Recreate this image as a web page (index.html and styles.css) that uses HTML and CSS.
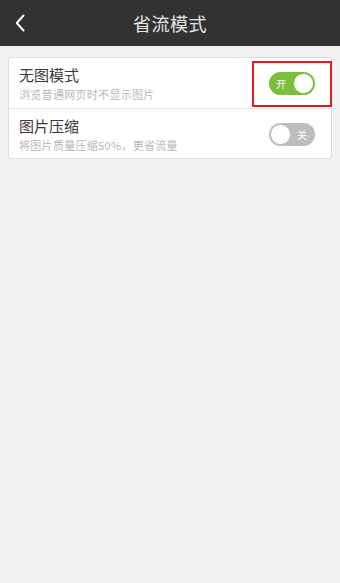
FILE: index.html
```html
<!DOCTYPE html>
<html lang="zh">
<head>
<meta charset="utf-8">
<link rel="stylesheet" href="styles.css">
</head>
<body>
<header class="topbar">
  <span class="back">
    <svg width="10" height="18" viewBox="0 0 10 18"><path d="M8.5 1.5 L1.8 9 L8.5 16.5" fill="none" stroke="#fff" stroke-width="2" stroke-linecap="round" stroke-linejoin="round"/></svg>
  </span>
  <h1 class="title">省流模式</h1>
</header>
<main class="page">
  <section class="card">
    <div class="row">
      <div class="text">
        <div class="name">无图模式</div>
        <div class="desc">浏览普通网页时不显示图片</div>
      </div>
      <div class="switch on"><span class="label">开</span><span class="knob"></span></div>
      <div class="highlight"></div>
    </div>
    <div class="row">
      <div class="text">
        <div class="name">图片压缩</div>
        <div class="desc">将图片质量压缩50%，更省流量</div>
      </div>
      <div class="switch off"><span class="knob"></span><span class="label">关</span></div>
    </div>
  </section>
</main>
</body>
</html>
```
FILE: styles.css
```css
* { box-sizing: border-box; }
html, body { margin: 0; padding: 0; }
body {
  width: 340px;
  height: 583px;
  background: #f2f2f2;
  font-family: "Noto Sans CJK SC", "Noto Sans", sans-serif;
  overflow: hidden;
}
.topbar {
  height: 46px;
  background: #323232;
  display: flex;
  align-items: center;
  justify-content: center;
  position: relative;
}
.back {
  position: absolute;
  left: 15px;
  top: 14px;
  display: flex;
}
.title {
  margin: 0;
  font-size: 18px;
  font-weight: 400;
  color: #e8e8e8;
  letter-spacing: 0.5px;
}
.page {
  padding: 11px 8px 0 8px;
}
.card {
  background: #fff;
  border: 1px solid #dcdcdc;
  border-radius: 3px;
}
.row {
  position: relative;
  height: 50px;
  display: flex;
  align-items: center;
  padding: 1px 16px 0 10px;
}
.row + .row {
  border-top: 1px solid #e4e4e4;
}
.text { flex: 1; }
.name {
  font-size: 15px;
  line-height: 20px;
  color: #3a3a3a;
}
.desc {
  font-size: 11px;
  line-height: 16px;
  color: #b8b8b8;
  margin-top: 1px;
  letter-spacing: 0.3px;
}
.switch {
  width: 46px;
  height: 23px;
  border-radius: 12px;
  display: flex;
  align-items: center;
  padding: 1px;
}
.switch.on { background: #7bbf3b; }
.switch.off { background: #bdbdbd; }
.knob {
  width: 21px;
  height: 21px;
  border-radius: 50%;
  background: #fff;
}
.switch.on .knob { border: 1px solid #7bbf3b; margin-left: auto; }
.switch.off .knob { border: 1px solid #bdbdbd; }
.label {
  font-size: 10px;
  color: #fff;
  width: 22px;
  text-align: center;
  line-height: 21px;
}
.highlight {
  position: absolute;
  left: 243px;
  top: 3px;
  width: 80px;
  height: 46px;
  border: 2px solid #e21a22;
}
```
